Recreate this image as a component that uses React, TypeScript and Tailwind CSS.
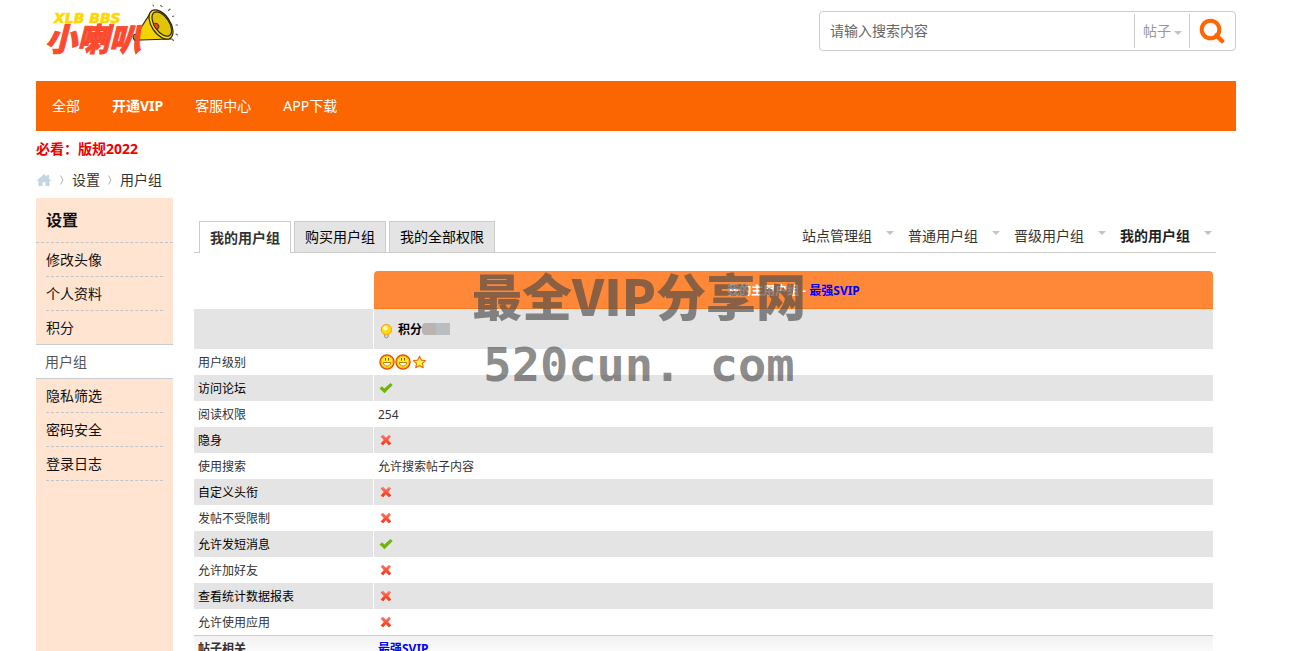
import React from "react";

const font = "font-['Noto_Sans','Noto_Sans_CJK_SC',sans-serif]";

function Logo() {
  return (
    <svg width="150" height="60" viewBox="0 0 150 60" role="img" aria-label="XLB BBS 小喇叭">
      <g stroke="#2a2410" strokeWidth="1.2" strokeLinejoin="round" strokeLinecap="round">
        <path d="M97 36c0-2 3-2 5-2l4 5-4 2c-3 1-5-2-5-5z" fill="#a99a1c" />
        <path d="M101 34L115 12l20 27-30 1c-3 0-4-4-4-6z" fill="#f2d402" />
        <ellipse cx="125" cy="24.500" rx="9.300" ry="16.500" transform="rotate(-34 125 24.5)" fill="#fade04" />
        <ellipse cx="125.800" cy="24" rx="7.300" ry="13.800" transform="rotate(-34 125.800 24)" fill="#e0c406" />
        <path d="M117.500 24.500c1-2 4-1.500 5 .5s0 4-1.500 4.500z" fill="#e8402c" strokeWidth="0.900" />
      </g>
      <g stroke="#666" strokeWidth="1.100" strokeLinecap="round">
        <path d="M117 5l.5 1M124.500 5.500l1.500 1M134 9l-1.500 1.500M138 16l-1.500.5M140 25l1.500 0M140 34l1.500 1M136 39l1.500 1.500" />
      </g>
      <text x="18" y="23" fill="#ffd800" stroke="#ffd800" strokeWidth="0.600" fontSize="14" className="font-['DejaVu_Sans',sans-serif] font-bold italic">XLB BBS</text>
      <text x="9" y="51" fill="#fb4a2e" stroke="#fb4a2e" strokeWidth="0.800" fontSize="32" className="font-['Noto_Sans_CJK_SC',sans-serif] font-black italic">小喇叭</text>
    </svg>
  );
}

function Caret({ className = "" }: { className?: string }) {
  return (
    <svg width="8" height="4" viewBox="0 0 8 4" className={className} aria-hidden="true">
      <path d="M0 0h8L4 4z" fill="#c4c4c4" />
    </svg>
  );
}

function Check() {
  return (
    <svg width="14" height="12" viewBox="0 0 14 12" role="img" aria-label="是">
      <path d="M0.500 6.500L3 4.200l2.300 2.300L11.500 1 13.700 3 5.500 11.200z" fill="#6fb50c" />
    </svg>
  );
}

function Cross() {
  return (
    <svg width="12" height="12" viewBox="0 0 12 12" className="ml-px" role="img" aria-label="否">
      <defs>
        <linearGradient id="cross" x1="0" y1="0" x2="0" y2="1">
          <stop offset="0" stopColor="#f4806c" />
          <stop offset="1" stopColor="#ff2a0c" />
        </linearGradient>
      </defs>
      <path d="M0.500 2.500L3 0.800 6 3.800l3-3L11 2.500 8.200 6 11.300 9.500 9 11.300 6 8.300l-3 3L0.700 9.500 3.800 6z" fill="url(#cross)" />
    </svg>
  );
}

function Smile() {
  return (
    <svg width="16" height="16" viewBox="0 0 16 16" aria-hidden="true">
      <circle cx="8" cy="8" r="7" fill="#ffe600" stroke="#e2500c" strokeWidth="1.500" />
      <circle cx="8" cy="8" r="5.900" fill="#fff01e" stroke="#fba80c" strokeWidth="0.800" />
      <path d="M6.500 4v2.500M9.500 4v2.500" stroke="#8a4a08" strokeWidth="1" />
      <path d="M4.200 8.500h7.600c-.4 2.400-1.800 3.500-3.800 3.500s-3.400-1.100-3.800-3.500z" fill="#fff" stroke="#b85a08" strokeWidth="0.800" />
    </svg>
  );
}

function Star() {
  return (
    <svg width="16" height="16" viewBox="0 0 16 16" aria-hidden="true">
      <path d="M8.500 2.200l1.800 3.900 4.300.5-3.200 2.900.9 4.200-3.800-2.100-3.800 2.100.9-4.200-3.200-2.900 4.300-.5z" fill="#fff04a" stroke="#e8780c" strokeWidth="1.200" strokeLinejoin="round" />
    </svg>
  );
}

function Bulb() {
  return (
    <svg width="16" height="16" viewBox="0 0 16 16" className="mt-0.5" aria-hidden="true">
      <path d="M6.500 11h3.800l-.4 3-1 1H7.800l-1-1z" fill="#e4e4e4" stroke="#777" strokeWidth="0.800" />
      <circle cx="8.400" cy="6.600" r="5.200" fill="#ffd90a" stroke="#ef9a10" strokeWidth="0.900" />
      <circle cx="7.400" cy="5.200" r="2.200" fill="#fffbc8" />
    </svg>
  );
}

const side = ["修改头像", "个人资料", "积分", "用户组", "隐私筛选", "密码安全", "登录日志"];
const groups = ["站点管理组", "普通用户组", "晋级用户组", "我的用户组"];
const tabs = ["我的用户组", "购买用户组", "我的全部权限"];

const rows: [string, React.ReactNode][] = [
  ["用户级别", <><Smile /><Smile /><Star /></>],
  ["访问论坛", <Check />],
  ["阅读权限", "254"],
  ["隐身", <Cross />],
  ["使用搜索", "允许搜索帖子内容"],
  ["自定义头衔", <Cross />],
  ["发帖不受限制", <Cross />],
  ["允许发短消息", <Check />],
  ["允许加好友", <Cross />],
  ["查看统计数据报表", <Cross />],
  ["允许使用应用", <Cross />],
];

function Chevron() {
  return (
    <svg width="4" height="10" viewBox="0 0 4 10" aria-hidden="true">
      <path d="M0.500 0.500L3 5 0.500 9.500" fill="none" stroke="#b4b4b4" />
    </svg>
  );
}

export default function App() {
  return (
    <div lang="zh-CN" className={`${font} flex h-screen flex-col overflow-hidden bg-white pl-9 pr-[71px] text-sm leading-5 text-[#333]`}>
      <header className="flex h-[81px] shrink-0 items-start justify-between">
        <a href="#home"><Logo /></a>
        <form className="mt-[11px] flex h-10 w-[417px] items-center rounded border border-[#ccc]" onSubmit={(e) => e.preventDefault()}>
          <input aria-label="搜索内容" placeholder="请输入搜索内容" className="min-w-0 flex-1 px-[10px] outline-none placeholder:text-[#666]" />
          <div className="relative flex h-[34px] w-[55px] items-center border-l border-[#ccc] pl-2">
            <select aria-label="搜索类型" className="w-full appearance-none text-[#999] outline-none">
              <option>帖子</option>
            </select>
            <Caret className="pointer-events-none absolute right-[7px] top-[17px]" />
          </div>
          <button type="submit" aria-label="搜索" className="flex h-[34px] w-[46px] items-center justify-center border-l border-[#ccc] pr-0.5">
            <svg width="26" height="26" viewBox="0 0 26 26" fill="none" stroke="#ff6500" aria-hidden="true">
              <circle cx="11.500" cy="11.500" r="8.800" strokeWidth="4" />
              <path d="M17.500 17.500l5.500 5.500" strokeWidth="4.500" strokeLinecap="round" />
            </svg>
          </button>
        </form>
      </header>

      <nav className="flex h-[50px] shrink-0 items-center gap-8 bg-[#fb6602] px-4 text-white">
        <a href="#all">全部</a>
        <a href="#vip" className="font-bold">开通VIP</a>
        <a href="#service">客服中心</a>
        <a href="#app">APP下载</a>
      </nav>

      <a href="#rules" className="mt-2 self-start font-bold text-[#f00000]">必看：版规2022</a>

      <nav aria-label="面包屑" className="mb-2 mt-[11px] flex items-center">
        <a href="#home" aria-label="首页" className="mr-2">
          <svg width="16" height="14" viewBox="0 0 16 14" fill="#c3d5e1" aria-hidden="true">
            <path d="M8 1L0.500 8h2v5h4V9h3v4h4V8h2L13 5.500V2h-2v1.700z" />
          </svg>
        </a>
        <Chevron />
        <a href="#settings" className="mx-2">设置</a>
        <Chevron />
        <a href="#groups" className="ml-2">用户组</a>
      </nav>

      <div className="flex min-h-0 flex-1 gap-[21px]">
        <aside className="w-[137px] shrink-0 bg-[#ffe4d2] text-[#111]">
          <h2 className="flex h-[45px] items-center border-b border-dashed border-[#bfc5c8] px-[10px] text-base font-bold">设置</h2>
          <ul>
            {side.map((s) =>
              s === "用户组" ? (
                <li key={s} className="-mt-px border-y border-[#c9ccce] bg-white px-[9px]">
                  <a href="#groups" className="flex h-[33px] items-center text-[#555]">{s}</a>
                </li>
              ) : (
                <li key={s} className="px-[10px]">
                  <a href={`#${s}`} className="flex h-[34px] items-center border-b border-dashed border-[#bfc5c8]">{s}</a>
                </li>
              ),
            )}
          </ul>
        </aside>

        <main className="min-w-0 flex-1 pr-5 pt-[23px]">
          <div className="flex h-8 justify-between border-b border-[#ccc] pl-[5px]">
            <div className="flex gap-[3px]">
              {tabs.map((t, i) => (
                <a
                  key={t}
                  href={`#tab-${i}`}
                  className={
                    i === 0
                      ? "flex h-8 items-center border border-b-0 border-[#ccc] bg-white px-[10px] font-bold"
                      : "flex h-8 items-center border border-[#ccc] bg-[#e4e4e4] px-[10px] text-black"
                  }
                >
                  {t}
                </a>
              ))}
            </div>
            <div className="flex gap-[14px] pr-1">
              {groups.map((g, i) => (
                <button key={g} type="button" className={i === 3 ? "flex h-[30px] items-center gap-[14px] font-bold text-[#222]" : "flex h-[30px] items-center gap-[14px]"}>
                  {g}
                  <Caret className="mb-1.5" />
                </button>
              ))}
            </div>
          </div>

          <div className="relative mt-[18px] pr-[3px]">
            <table className="w-full table-fixed border-separate border-spacing-0 text-xs leading-4">
              <colgroup>
                <col className="w-[180px]" />
                <col />
              </colgroup>
              <thead>
                <tr className="h-[38px]">
                  <td />
                  <th scope="col" className="rounded-t border-b border-[#fb7a1c] bg-[#ff8838] pt-0.5 text-center font-bold text-white">
                    我的主用户组 - <span className="text-[#0000ff]">最强SVIP</span>
                  </th>
                </tr>
              </thead>
              <tbody>
                <tr className="h-10 bg-[#e4e4e4]">
                  <td className="border-r border-white" />
                  <td className="px-1 pt-0.5">
                    <div className="flex items-center gap-1 font-bold text-black">
                      <Bulb />
                      <div className="flex items-center">
                        积分
                        <span className="mb-0.5 h-3 w-[14px] rounded-l bg-[#b9b4b0]" />
                        <span className="mb-0.5 h-3 w-[14px] bg-[#b9bec2]" />
                      </div>
                    </div>
                  </td>
                </tr>
                {rows.map(([label, value], i) => (
                  <tr key={label} className={i % 2 ? "h-[26px] bg-[#e4e4e4] text-black" : "h-[26px]"}>
                    <th scope="row" className="border-r border-white px-1 pt-0.5 text-left font-normal">{label}</th>
                    <td className={typeof value === "string" ? "px-1 pt-0.5" : "px-[5px]"}>
                      <div className="flex items-center">{value}</div>
                    </td>
                  </tr>
                ))}
                <tr className="h-[27px] bg-linear-to-b from-[#f2f2f2] to-white font-bold">
                  <th scope="row" className="border-t border-[#ccc] px-1 text-left">帖子相关</th>
                  <td className="border-t border-[#ccc] px-1 text-[#0000ff]">最强SVIP</td>
                </tr>
              </tbody>
            </table>

            <div className="pointer-events-none absolute -top-1 left-[275px] w-[340px] whitespace-nowrap text-center font-bold text-[#4b4b4b]/65">
              <p className="font-['Noto_Sans_CJK_SC',sans-serif] text-[50px] font-black leading-[54px]">最全VIP分享网</p>
              <p className="mt-[17px] font-['DejaVu_Sans_Mono',monospace] text-[47px] leading-[54px]">520cun. com</p>
            </div>
          </div>
        </main>
      </div>
    </div>
  );
}
